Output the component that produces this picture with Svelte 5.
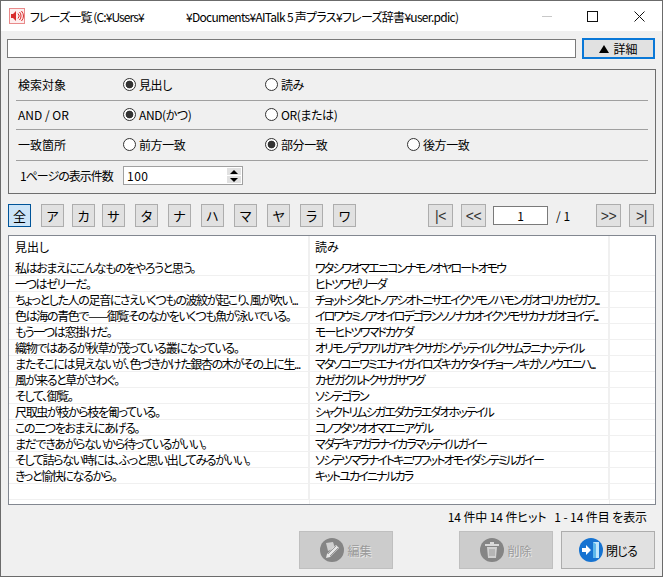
<script>
  const jp = [
    ['私はおまえにこんなものをやろうと思う。', 'ワタシワオマエニコンナモノオヤロートオモウ'],
    ['一つはゼリーだ。', 'ヒトツワゼリーダ'],
    ['ちょっとした人の足音にさえいくつもの波紋が起こり、風が吹い...', 'チョットシタヒトノアシオトニサエイクツモノハモンガオコリカゼガフ...'],
    ['色は海の青色で——御覧そのなかをいくつも魚が泳いでいる。', 'イロワウミノアオイロデゴランソノナカオイクツモサカナガオヨイデ...'],
    ['もう一つは窓掛けだ。', 'モーヒトツワマドカケダ'],
    ['織物ではあるが秋草が茂っている叢になっている。', 'オリモノデワアルガアキクサガシゲッテイルクサムラニナッテイル'],
    ['またそこには見えないが、色づきかけた銀杏の木がその上に生...', 'マタソコニワミエナイガイロズキカケタイチョーノキガソノウエニハ...'],
    ['風が来ると草がさわぐ。', 'カゼガクルトクサガサワグ'],
    ['そして、御覧。', 'ソシテゴラン'],
    ['尺取虫が枝から枝を匍っている。', 'シャクトリムシガエダカラエダオホッテイル'],
    ['この二つをおまえにあげる。', 'コノフタツオオマエニアゲル'],
    ['まだできあがらないから待っているがいい。', 'マダデキアガラナイカラマッテイルガイー'],
    ['そして詰らない時には、ふっと思い出してみるがいい。', 'ソシテツマラナイトキニワフットオモイダシテミルガイー'],
    ['きっと愉快になるから。', 'キットユカイニナルカラ'],
    ['', '']
  ];
  const kana = ['全', 'ア', 'カ', 'サ', 'タ', 'ナ', 'ハ', 'マ', 'ヤ', 'ラ', 'ワ'];
</script>

<div class="win">
  <div class="title">
    <svg class="appicon" width="16" height="16" viewBox="0 0 16 16">
      <rect x="0.5" y="0.5" width="15" height="15" fill="#fdeeee" stroke="#e98a8a"/>
      <path d="M2 6h2l3-3v10l-3-3H2z" fill="#d92b2b"/>
      <path d="M9 5.5a3.5 3.5 0 0 1 0 5M10.5 4a6 6 0 0 1 0 8M12.5 3a8 8 0 0 1 0 10" fill="none" stroke="#d92b2b"/>
    </svg>
    <span class="t1">フレーズ一覧 (C:¥Users¥</span>
    <span class="t2">¥Documents¥AITalk 5 声プラス¥フレーズ辞書¥user.pdic)</span>
    <div class="caption">
      <span class="min"></span>
      <span class="max"></span>
      <svg width="11" height="11" viewBox="0 0 11 11"><path d="M0.5 0.5l10 10M10.5 0.5l-10 10" stroke="#111" fill="none"/></svg>
    </div>
  </div>

  <div class="body">
    <div class="search">
      <div class="field"></div>
      <div class="detail"><span class="tri"></span>詳細</div>
    </div>

    <div class="group">
      <div class="grow r1">
        <span class="lbl">検索対象</span>
        <span class="radio on">見出し</span>
        <span class="radio">読み</span>
      </div>
      <div class="grow r2">
        <span class="lbl">AND / OR</span>
        <span class="radio on">AND(かつ)</span>
        <span class="radio">OR(または)</span>
      </div>
      <div class="grow r1">
        <span class="lbl">一致箇所</span>
        <span class="radio">前方一致</span>
        <span class="radio on">部分一致</span>
        <span class="radio">後方一致</span>
      </div>
      <div class="grow last">
        <span class="lbl count">1ページの表示件数</span>
        <div class="spin">
          <span class="val">100</span>
          <div class="arrows"><i class="up"></i><i class="down"></i></div>
        </div>
      </div>
    </div>

    <div class="toolbar">
      <div class="kana">
        {#each kana as k, i}
          <span class="kbtn k{i}">{k}</span>
        {/each}
      </div>
      <div class="nav">
        <span class="kbtn nb">|&lt;</span>
        <span class="kbtn nb">&lt;&lt;</span>
        <span class="page">1</span>
        <span class="total">/ 1</span>
        <span class="kbtn nb">&gt;&gt;</span>
        <span class="kbtn nb">&gt;|</span>
      </div>
    </div>

    <div class="table">
      <div class="row head">
        <span>見出し</span><span>読み</span><span></span>
      </div>
      {#each jp as r}
        <div class="row">
          <span>{r[0]}</span><span class="yomi">{r[1]}</span><span></span>
        </div>
      {/each}
    </div>

    <div class="status">14 件中 14 件ヒット&nbsp;&nbsp;&nbsp;1 - 14 件目 を表示</div>

    <div class="actions">
      <div class="act off edit">
        <svg width="24" height="24" viewBox="0 0 24 24">
          <circle cx="12" cy="12" r="12" fill="#858585"/>
          <path d="M6 5l7-1 2 6-7 3z" fill="#cfcfcf"/>
          <path d="M6 20l1-4 9-9 3 3-9 9z" fill="#e6e6e6"/>
          <path d="M8 16l8-8M10 18l8-8" stroke="#9a9a9a" fill="none"/>
        </svg>
        編集
      </div>
      <div class="act off del">
        <svg width="24" height="24" viewBox="0 0 24 24">
          <circle cx="12" cy="12" r="12" fill="#858585"/>
          <path d="M5 6h14v2H5zM10 4h4v2h-4z" fill="#d8d8d8"/>
          <path d="M7 9h10l-1 11H8z" fill="#d0d0d0"/>
          <path d="M10 11v7M12 11v7M14 11v7" stroke="#9a9a9a" fill="none"/>
        </svg>
        削除
      </div>
      <div class="act close">
        <svg width="24" height="24" viewBox="0 0 24 24">
          <circle cx="12" cy="12" r="12" fill="#1673d1"/>
          <path d="M3 10h4V7l5 5-5 5v-3H3z" fill="#fff"/>
          <path d="M14 4h6v16h-6z" fill="#bfe6fb"/>
          <path d="M14 4l3 2v14h-3z" fill="#5db8ec"/>
        </svg>
        <span class="closelbl">閉じる</span>
      </div>
    </div>
  </div>
</div>

<style>
  :global(body) {
    margin: 0;
  }
  .win {
    width: 663px;
    height: 577px;
    box-sizing: border-box;
    border: 1px solid #6b6b6b;
    background: #f0f0f0;
    font-family: "Noto Sans CJK JP", "Liberation Sans", sans-serif;
    font-feature-settings: "palt";
    font-size: 12px;
    color: #000;
    overflow: hidden;
  }
  .title {
    height: 30px;
    background: #fff;
    display: flex;
    align-items: center;
    padding-left: 8px;
    font-size: 12px;
  }
  .appicon {
    margin-right: 5px;
  }
  .t1 {
    width: 156px;
    letter-spacing: -0.9px;
  }
  .t2 {
    letter-spacing: -0.72px;
  }
  .caption {
    margin-left: auto;
    display: flex;
    align-items: center;
  }
  .caption svg {
    margin: 0 17px 0 36px;
  }
  .min {
    width: 10px;
    height: 1px;
    background: #c8c8c8;
    margin-right: 35px;
  }
  .max {
    width: 9px;
    height: 9px;
    border: 1px solid #111;
  }
  .body {
    padding: 7px 6px 0 6px;
  }
  .search {
    display: flex;
    align-items: center;
    gap: 6px;
  }
  .field {
    width: 567px;
    height: 17px;
    background: #fff;
    border: 1px solid #7a7a7a;
  }
  .detail {
    width: 69px;
    height: 15px;
    border: 2px solid #0a78d7;
    padding: 1px 0;
    background: #e1e1e1;
    display: flex;
    align-items: center;
    justify-content: center;
    gap: 4px;
    line-height: 15px;
  }
  .tri {
    width: 0;
    height: 0;
    border-left: 5px solid transparent;
    border-right: 5px solid transparent;
    border-bottom: 8px solid #000;
  }
  .group {
    box-sizing: border-box;
    margin: 10px 0 0 1px;
    width: 648px;
    height: 125px;
    border: 1px solid #6e6e6e;
    padding: 0 7px;
  }
  .grow {
    box-sizing: border-box;
    border-bottom: 1px solid #a0a0a0;
    padding-bottom: 2px;
    display: grid;
    grid-template-columns: 107px 142px 142px 1fr;
    align-items: center;
  }
  .r1 {
    height: 31px;
  }
  .r2 {
    height: 29px;
  }
  .grow.last {
    height: 31px;
    border-bottom: 0;
    grid-template-columns: 107px 1fr;
  }
  .lbl {
    padding-left: 2px;
  }
  .count {
    padding-left: 4px;
    letter-spacing: -1px;
  }
  .radio {
    display: flex;
    align-items: center;
    gap: 3px;
    letter-spacing: -0.4px;
  }
  .radio::before {
    content: "";
    width: 11px;
    height: 11px;
    border: 1px solid #333;
    border-radius: 50%;
    background: #fff;
    flex: none;
  }
  .radio.on::before {
    background: radial-gradient(circle, #333 0 3.5px, #fff 4.2px);
  }
  .spin {
    width: 118px;
    height: 17px;
    background: #fff;
    border: 1px solid #a0a0a0;
    display: flex;
    align-items: center;
    justify-content: space-between;
  }
  .val {
    padding-left: 3px;
    letter-spacing: 0.5px;
  }
  .arrows {
    width: 14px;
    height: 15px;
    margin-right: 1px;
    display: flex;
    flex-direction: column;
    gap: 1px;
  }
  .arrows i {
    flex: 1;
    background: #e1e1e1;
    display: flex;
    align-items: center;
    justify-content: center;
  }
  .arrows i::before {
    content: "";
    border-left: 4px solid transparent;
    border-right: 4px solid transparent;
  }
  .up::before {
    border-bottom: 4px solid #000;
  }
  .down::before {
    border-top: 4px solid #000;
  }
  .toolbar {
    display: flex;
    justify-content: space-between;
    margin: 10px 0 0 1px;
    height: 23px;
    width: 646px;
  }
  .kana {
    display: flex;
    gap: 10px;
  }
  .kbtn {
    box-sizing: border-box;
    width: 23px;
    height: 23px;
    background: #e1e1e1;
    border: 1px solid #adadad;
    display: flex;
    align-items: center;
    justify-content: center;
    font-size: 13px;
  }
  .k0 {
    background: #cce4f7;
    border-color: #005499;
  }
  .k2 {
    margin-left: -2px;
  }
  .k3 {
    margin-left: -3px;
  }
  .nav {
    display: flex;
    align-items: center;
  }
  .nb {
    width: 25px;
    font-family: "Liberation Sans", sans-serif;
    font-size: 14px;
    letter-spacing: -0.5px;
    color: #333;
  }
  .nb:nth-child(2),
  .nb:nth-child(6) {
    margin-left: 8px;
  }
  .page {
    box-sizing: border-box;
    width: 55px;
    height: 19px;
    margin-left: 7px;
    background: #fff;
    border: 1px solid #7a7a7a;
    text-align: center;
    line-height: 17px;
  }
  .total {
    width: 48px;
    padding-left: 8px;
    box-sizing: border-box;
  }
  .table {
    box-sizing: border-box;
    margin: 8px 0 0 1px;
    width: 648px;
    height: 270px;
    border: 1px solid #828790;
    overflow: hidden;
    background: #fff linear-gradient(to right, transparent 300px, #f0f0f0 300px, #f0f0f0 301px, transparent 301px, transparent 600px, #f0f0f0 600px, #f0f0f0 601px, transparent 601px);
  }
  .row {
    display: grid;
    grid-template-columns: 300px 300px 1fr;
    height: 16px;
    box-sizing: border-box;
    border-bottom: 1px solid #f0f0f0;
    line-height: 15px;
  }
  .row span {
    padding-left: 6px;
    border-right: 1px solid #f0f0f0;
    white-space: nowrap;
    letter-spacing: -1.35px;
    min-width: 0;
  }
  .row .yomi {
    letter-spacing: -1.9px;
  }
  .row span:last-child {
    border-right: 0;
  }
  .head {
    height: 24px;
    border-bottom: 0;
    line-height: 22px;
  }
  .head span {
    letter-spacing: 0;
  }
  .status {
    margin-top: 3px;
    height: 17px;
    line-height: 17px;
    text-align: right;
    padding-right: 9px;
    letter-spacing: -0.1px;
  }
  .actions {
    display: flex;
    margin-top: 6px;
    padding-left: 292px;
    gap: 8px;
  }
  .act {
    box-sizing: border-box;
    width: 94px;
    height: 38px;
    background: #e1e1e1;
    border: 1px solid #adadad;
    display: flex;
    align-items: center;
    justify-content: center;
    gap: 3px;
    font-size: 12px;
  }
  .off {
    background: #cccccc;
    border-color: #bfbfbf;
    color: #9a9a9a;
    text-shadow: 1px 1px 0 #e8e8e8;
  }
  .closelbl {
    letter-spacing: -0.8px;
  }
  .del {
    margin-left: 58px;
  }
</style>
